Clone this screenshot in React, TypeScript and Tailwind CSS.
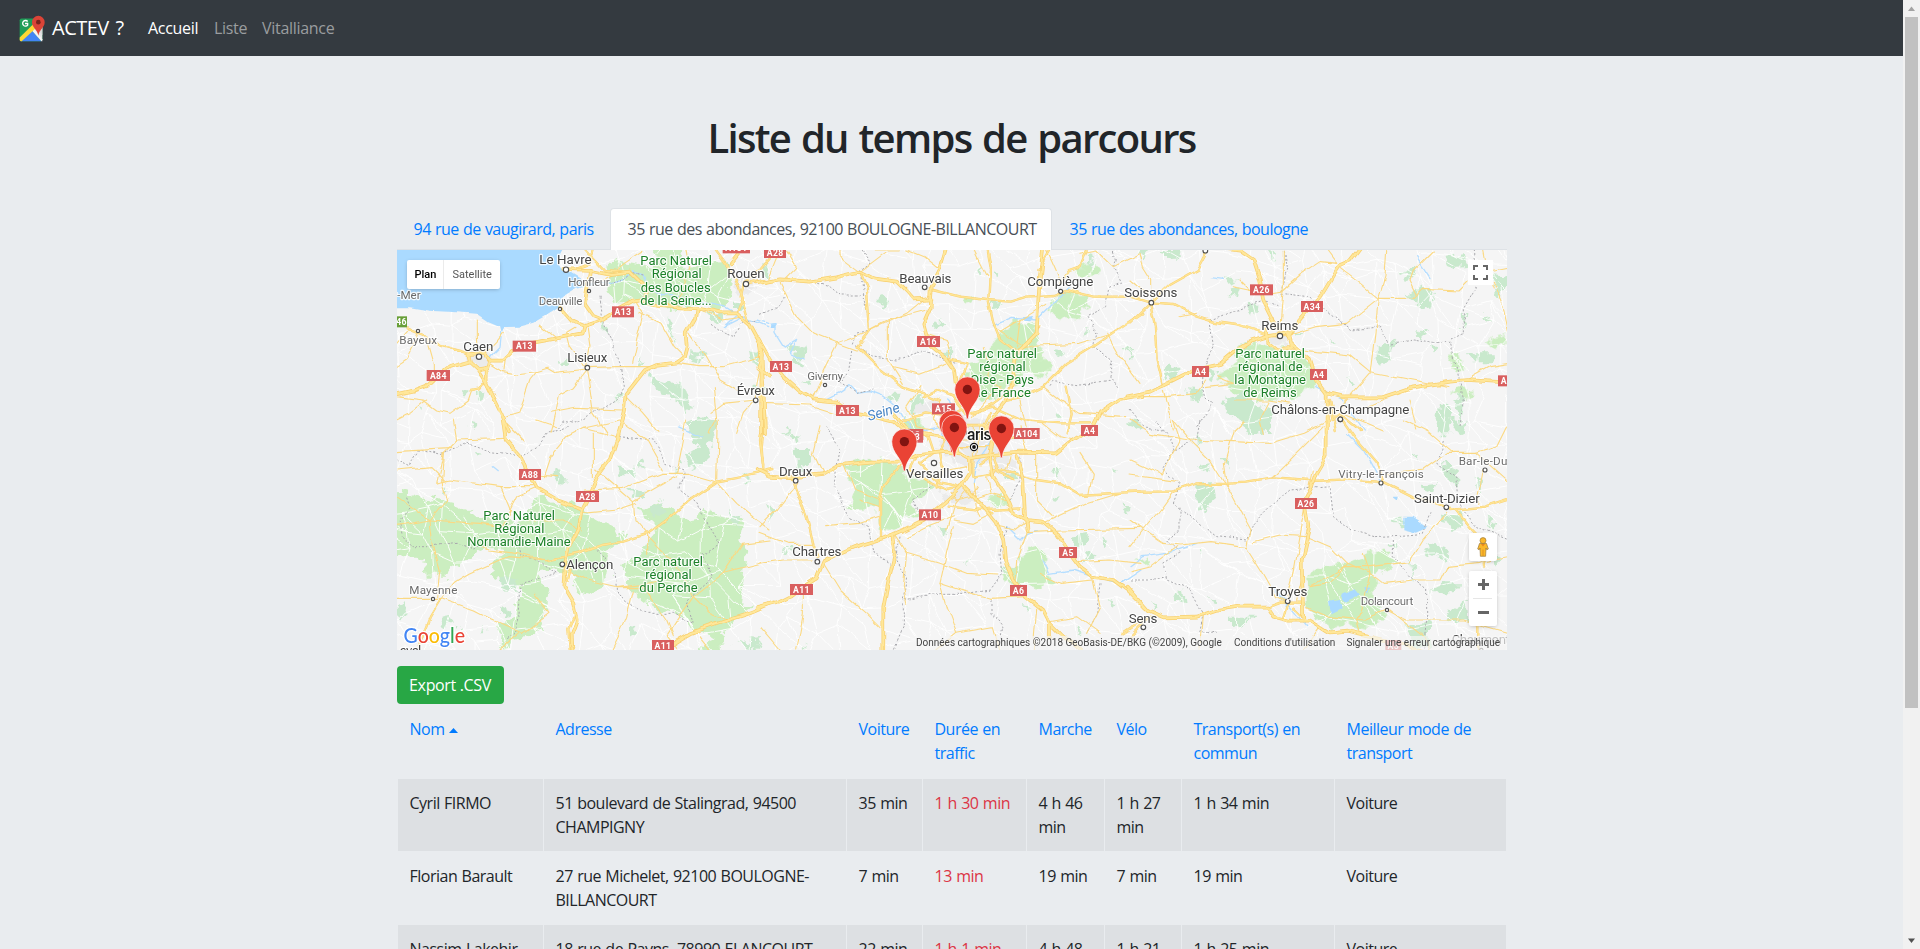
import React from "react";

type Label = [number, number, string, number, string?];
type Shield = [number, number, number, string, string?];
type Tile = {
  x: number;
  y: number;
  parks: string[];
  woods: string[];
  water: string[];
  rivers: string[];
  borders: string[];
  motorways: string[];
  primary: string[];
  secondary: string[];
  shields: Shield[];
  dots: [number, number, number][];
  labels: Label[];
};

/* Each tile is stored in its own 3x coordinate space. */
const TILES: Tile[] = [
  {
    x: 390,
    y: 200,
    parks: [
      "780,140 860,140 890,200 960,190 1010,180 1025,250 1010,310 980,325 940,300 900,330 860,330 800,320 760,300 720,310 680,310 655,270 660,230 650,200 680,180 740,190 790,200 800,170",
    ],
    woods: [
      "930,330 1000,340 990,370 960,360", "780,530 830,545 880,570 905,610 890,640 860,600 810,575 790,560",
      "880,670 940,645 985,660 975,700 900,700", "835,350 852,390 855,425 840,400", "1080,450 1120,460 1110,500 1085,480",
      "510,480 535,475 530,495 515,495", "260,575 280,580 275,600 258,592", "215,570 240,575 225,590", "1110,190 1140,200 1135,240 1110,220",
      "85,615 100,620 92,630", "1035,310 1060,310 1055,330 1035,330", "640,350 655,380 645,400 635,370", "900,460 950,470 940,485 905,480",
      "680,570 700,580 690,600", "1095,550 1130,560 1120,580 1090,575", "750,470 765,480 752,490",
    ],
    water: [
      "0,130 525,130 500,180 512,205 545,218 590,246 640,250 560,266 520,290 505,320 470,345 430,368 385,380 345,381 335,400 330,380 295,365 265,345 230,342 180,338 120,335 60,325 0,325",
    ],
    rivers: [
      "600,247 660,250 700,240 730,215 760,225 770,260 820,290 870,290 950,310 1000,320 1040,345 1000,380 1060,350 1130,380",
      "335,395 330,440 300,470",
    ],
    borders: [
      "630,290 640,370 660,410 690,490 700,560 680,600 610,640 560,670 520,660 500,690", "760,225 730,218 700,240 660,250",
      "960,370 1000,400 1030,410 1050,370 1100,360",
    ],
    motorways: [
      "0,590 70,575 110,560 135,535 180,500 235,485", "235,462 285,460 300,482 295,500 262,505 240,485 235,462",
      "300,482 340,482 370,455 430,428 500,415 575,400 580,378 630,362 665,340 730,305 760,300 800,318 920,325 990,340 1040,340 1080,375 1110,430 1115,470 1105,500 1140,530",
      "920,325 915,355 890,400 893,440 885,470 860,488 800,495 765,510 710,580 705,630 685,720",
      "262,505 285,540 310,590 335,640 360,700", "520,207 600,210 660,222 720,215 770,265 760,300",
      "600,210 585,310 610,345 635,355", "510,320 550,365 580,378", "1020,190 1060,140", "1115,460 1113,700",
      "290,500 290,545",
    ],
    primary: [
      "615,140 600,190 560,205", "575,140 640,210 700,215", "965,140 1010,200 1040,240 1060,290 1040,340", "1150,160 1090,230 1065,250 1055,290 1080,375",
      "50,385 100,405 150,440 235,462", "285,545 270,565 245,570", "1065,255 1120,240",
    ],
    secondary: [
      "85,392 75,430 50,480 20,500", "110,420 130,490 130,520", "262,360 262,410 265,460", "340,400 320,425 285,460",
      "300,490 340,515 380,522 440,515 475,505 500,520 590,510 540,440 530,400 555,385", "590,503 680,500 800,500",
      "590,515 600,570 610,640 650,700", "590,510 550,560 505,585 495,640 480,700", "440,515 420,540 400,600 385,640 350,650",
      "20,590 100,600 140,630 180,640 235,600 245,570", "740,310 760,340 740,420 725,490", "750,340 810,370 850,440 880,470",
      "900,400 950,470 990,540 1040,570", "860,490 930,500 1000,500 1080,480 1110,470", "1110,500 1100,560 1095,600 1060,640 1040,700",
      "710,590 760,640 810,700", "350,470 345,510", "20,430 60,385", "500,415 450,375", "920,330 1000,360 1060,350",
      "760,150 700,190 640,240", "590,370 600,440 590,500", "20,660 60,640 110,600", "890,140 900,200 870,290 850,320",
      "970,560 980,660 960,700", "1095,600 1000,610 960,640", "480,640 560,625 700,630",
    ],
    shields: [
      [666, 319, 66, "A13"], [368, 422, 70, "A13"], [110, 510, 70, "A84"], [998, 127, 82, "A131"], [1122, 141, 66, "A28"], [0, 349, 51, "A46", "#689f38"],
    ],
    dots: [[528, 209, 8], [597, 273, 5], [510, 327, 5], [1068, 252, 8], [84, 393, 5], [267, 470, 8], [592, 503, 7], [1097, 601, 7]],
    labels: [
      [448, 192, "Le Havre", 157, "city"], [535, 257, "Honfleur", 124, "town"], [446, 314, "Deauville", 131, "town"],
      [1012, 234, "Rouen", 112, "city"], [28, 432, "Bayeux", 113, "town"], [220, 453, "Caen", 90, "city"], [532, 486, "Lisieux", 120, "city"],
      [1040, 585, "Évreux", 115, "city"], [-30, 297, "Sur-Mer", 122, "town"],
      [751, 196, "Parc Naturel", 215, "park"], [785, 235, "Régional", 150, "park"], [752, 275, "des Boucles", 210, "park"], [751, 314, "de la Seine...", 214, "park"],
    ],
  },
  {
    x: 760,
    y: 200,
    parks: [
      "740,370 830,370 840,420 830,460 870,500 850,530 800,520 760,560 700,540 640,520 620,490 690,470 710,420",
      "590,290 640,285 655,300 610,318", "890,280 950,275 990,310 960,360 900,350 870,340", "950,200 1010,190 1020,220 980,230 950,225",
      "610,520 720,520 740,560 700,600 640,590", "780,440 840,440 850,480 800,490",
    ],
    woods: [
      "360,285 385,290 370,325 350,305", "90,440 140,450 130,500 100,480", "880,450 915,455 900,480", "525,360 550,355 545,372 522,375",
      "980,160 1005,165 990,200", "650,210 670,205 668,222", "680,310 720,305 700,330", "440,610 480,590 500,620 450,640", "380,590 420,590 400,610",
      "1090,450 1130,450 1110,470", "560,440 580,450 575,480", "125,545 160,540 150,560", "540,455 570,450 560,480",
      "885,640 910,640 900,660", "700,210 720,220 705,235", "970,390 990,395 975,410",
    ],
    water: ["785,352 820,348 808,364 790,362", "25,368 45,366 46,385 30,385"],
    rivers: [
      "-10,360 20,370 45,370 45,400 70,440 110,415 90,460 130,480", "200,600 240,580 270,560 290,580 330,575 370,590 420,630 450,680",
      "700,380 760,355 830,360 870,320 930,260", "560,700 600,640 560,600",
    ],
    borders: [
      "300,150 330,190 300,210 310,280 325,340 330,390 290,400 280,430 330,470 410,480 490,450 560,480 590,490",
      "140,240 210,260 240,285 300,285", "1060,150 1070,180 1060,200 1085,250 1050,260 1040,320 980,350 1010,400 1000,440 1060,480 1050,530 1070,560",
      "870,560 880,545 960,555 1050,540", "275,450 265,520 240,550 290,580 340,570", "0,340 50,320 80,290",
    ],
    motorways: [
      "-10,250 60,238 150,245 230,232 300,215 340,235 410,245 440,275 460,298 515,295",
      "560,140 540,210 515,260 512,320 490,370 500,405 515,440 560,475 585,510 590,550 620,620",
      "850,140 840,230 835,300 830,400 800,430 770,455 760,520 740,600 700,650 670,700",
      "-5,415 30,480 70,530 120,575 160,598 230,605 280,640 340,650 400,665 440,700", "1150,588 1080,600 1020,640 990,700",
      "0,425 10,560 15,700",
    ],
    primary: [
      "520,270 600,290 680,300 750,305 800,290 880,285 920,270 1000,290 1140,290", "1150,340 1060,400 1000,440 920,490 850,560 790,590 740,600",
      "300,215 320,260 330,390 290,440 350,500 430,560 490,580 540,600", "680,150 690,210 685,300 700,370 720,420 760,450",
      "980,150 960,200 930,210 900,250", "490,590 530,570 580,590 620,640 700,620 790,660 900,670 990,670", "560,475 620,490 600,540",
      "430,660 500,640 560,650 620,620", "740,580 700,610 640,640", "920,560 935,640 920,700", "870,150 835,210",
    ],
    secondary: [
      "60,250 110,350 160,400 235,430 290,450", "235,430 200,500 160,590", "240,150 240,170 300,215", "380,155 360,170 300,215", "540,210 490,170 440,150",
      "640,150 680,230", "230,430 320,395 385,360 500,330", "385,360 385,480 430,550", "400,500 480,520 560,490", "720,400 800,350 860,310",
      "760,450 830,435 960,430 1060,400", "850,560 900,600 960,640 1100,650", "0,610 150,615 230,640", "860,150 900,240",
      "500,400 560,420 580,500", "700,380 790,440 840,380", "780,360 770,440", "670,440 690,540 740,580", "1040,400 1080,470 1140,550",
      "20,250 60,150", "80,150 110,200 60,250", "640,650 680,600 720,560", "480,560 440,620 470,680", "540,600 520,660 560,700", "780,600 800,690",
      "960,160 1010,150 1060,200 1140,160", "520,275 440,340 330,390", "460,640 470,680 520,690", "340,150 420,150",
    ],
    shields: [
      [13, 141, 65, "A28"], [471, 408, 69, "A16"], [30, 483, 66, "A13"], [228, 615, 69, "A13"], [516, 610, 69, "A15"], [963, 675, 51, "A4"], [421, 687, 69, "A13"],
    ],
    dots: [[494, 262, 7], [902, 274, 6], [195, 555, 5]],
    labels: [
      [418, 248, "Beauvais", 156, "city"], [802, 257, "Compiègne", 198, "city"], [142, 539, "Giverny", 107, "town"],
      [622, 473, "Parc naturel", 209, "park"], [658, 512, "régional", 139, "park"], [631, 551, "Oise - Pays", 191, "park"], [640, 590, "de France", 173, "park"],
    ],
  },
  {
    x: 1130,
    y: 200,
    parks: [
      "320,440 370,425 420,445 470,440 540,480 560,520 550,560 500,590 430,600 340,590 290,560 265,520 310,490",
      "960,450 990,460 1000,500 970,520 955,480", "950,580 990,560 1025,575 1010,600", "1080,410 1125,400 1140,430 1070,435",
    ],
    woods: [
      "90,150 150,150 160,170 110,175", "285,235 330,240 300,248", "300,265 330,262 320,290 290,285", "830,290 870,255 915,280 900,330 860,310",
      "945,170 1000,165 1020,200 960,205", "740,440 790,425 780,460 755,500 740,470", "1010,460 1090,460 1095,490 1040,490",
      "280,600 340,580 420,640 430,700 360,680 300,650", "175,565 220,570 210,600 180,595", "930,620 955,620 965,700 920,700",
      "1080,225 1140,230 1110,300", "110,490 150,510 130,550 105,530", "810,220 860,205 850,230 820,240", "420,150 435,170 425,185",
      "1060,350 1095,345 1090,370", "990,340 1010,350 1000,385", "350,310 380,320 375,350", "600,420 618,425 608,430", "860,390 885,395 875,415",
      "650,535 680,545 665,555", "25,150 60,150 40,175", "975,590 1000,600 990,670", "500,400 515,405 505,412", "230,510 260,520 250,545", "900,430 915,445 905,455",
    ],
    water: [],
    rivers: ["860,170 880,200 900,230", "240,230 280,235", "560,560 640,600 700,690"],
    borders: [
      "460,150 470,210 455,280 530,290 600,340 670,390 750,380 780,430 850,420 910,430 960,430 980,500 1000,600 990,680",
      "240,360 320,330 400,300 445,320", "240,360 250,440 215,520 230,590 250,610 200,680", "1030,150 1040,260 1000,330 1000,400 960,420", "0,630 40,680 100,690",
    ],
    motorways: [
      "225,140 330,152 370,180 390,240 400,300 430,360 450,390", "480,430 540,480 560,540 590,580 590,700", "590,580 640,592 760,592 850,562 960,545 1010,540 1140,548",
      "695,140 660,185 625,200 570,290 500,370 470,410", "-10,590 60,575 110,550 190,510 270,492 320,450 360,425 410,410", "410,410 470,400 480,440 440,445 415,425 410,390",
    ],
    primary: [
      "230,155 200,210 120,255 60,310 0,370", "60,310 130,315 200,350 250,365 320,375 410,405", "60,310 75,380 80,480 100,560", "0,290 60,308", "590,590 605,660 630,640 690,690",
      "600,600 620,690", "410,405 450,410 480,405",
    ],
    secondary: [
      "30,160 40,200 65,240 65,300", "460,150 460,260 450,380", "460,270 510,225 570,185 620,190", "480,405 560,380 650,370 745,295 850,295 880,265 990,270 1030,230",
      "745,295 735,400 720,520 650,600 610,640", "590,150 620,190", "630,205 690,250 745,295", "770,150 765,230 745,295", "910,150 850,210 840,240 860,280",
      "480,445 560,455 660,465 720,515 850,540 960,560", "100,570 130,690", "0,590 110,590 200,580 230,540", "260,530 310,550 230,560", "310,600 420,600 480,610",
      "1060,150 1075,230 1090,270", "1090,250 1125,330 1140,400", "1010,540 1080,500 1140,490", "640,640 760,690", "150,350 200,340", "420,600 390,660 400,700",
      "330,240 360,270", "0,240 60,290", "1040,220 1140,200", "310,260 400,280 460,270", "840,600 860,690", "670,640 740,610 780,595",
    ],
    shields: [[360, 253, 69, "A26"], [513, 303, 66, "A34"], [186, 498, 51, "A4"], [540, 507, 51, "A4"], [1104, 526, 51, "A4"]],
    dots: [[226, 152, 7], [64, 308, 7], [450, 408, 8], [631, 658, 7]],
    labels: [
      [-17, 292, "Soissons", 159, "city"], [394, 389, "Reims", 111, "city"], [424, 643, "Châlons-en-Champagne", 414, "city"],
      [316, 473, "Parc naturel", 209, "park"], [324, 512, "régional de", 194, "park"], [313, 551, "la Montagne", 215, "park"], [340, 590, "de Reims", 160, "park"],
    ],
  },
  {
    x: 390,
    y: 420,
    parks: [
      "0,205 70,225 200,255 280,290 400,300 430,240 460,225 500,245 565,260 620,300 700,340 690,365 640,400 660,440 650,500 600,520 540,500 560,470 490,450 440,460 480,520 470,560 450,600 460,630 420,650 380,660 330,690 335,650 320,620 350,600 380,590 390,540 390,500 300,460 310,430 350,400 260,380 230,420 190,440 180,470 110,470 105,420 0,400",
      "750,270 800,240 850,270 880,300 930,290 940,260 1000,290 1060,300 1050,350 1070,400 1060,480 1050,550 1090,560 1040,600 990,640 1000,680 940,640 860,580 800,570 760,540 720,510 720,480 690,430 740,420 770,370 800,330 790,310",
      "930,680 990,640 1000,700 930,700",
    ],
    woods: [
      "890,20 980,5 985,40 950,80 960,120 900,150 880,110 930,80", "680,140 740,140 740,170 690,165", "500,150 525,165 520,200 495,180",
      "145,590 180,585 190,610 150,620", "20,550 50,540 40,600 20,590", "718,205 765,215 755,235 720,225", "780,250 820,240 830,280 790,290",
      "330,470 380,480 380,510 340,500", "720,620 745,625 735,650 720,645", "250,90 272,95 262,110", "1020,280 1045,285 1035,330", "750,120 770,130 755,145",
      "850,140 870,150 860,165", "1060,175 1080,170 1075,190", "200,620 215,625 205,635", "240,5 260,10 250,30", "320,560 360,570 350,590",
      "1030,670 1110,660 1100,690", "155,200 185,210 170,225", "280,620 290,640 275,640",
    ],
    water: [],
    rivers: ["310,140 325,152", "870,20 940,50"],
    borders: [
      "20,120 60,140 90,90 150,105 230,70 300,95 400,105 440,80 470,40 540,15", "690,50 790,60 830,130 880,150 870,210 920,250 990,370 940,400 970,470 890,540 910,610 850,580 760,580 680,520 675,450 620,390",
      "50,230 60,260 30,300 40,350 70,380 130,380 200,370 250,390 380,350 390,410 440,420 500,460 390,490 380,640 350,660",
    ],
    motorways: [
      "340,-10 350,60 395,110 410,150 440,205 500,240 570,265", "700,-10 680,60 660,120 615,180 590,240 575,270 565,330 535,390 525,430 520,500 550,550 560,600 545,640 548,700",
      "1150,550 1080,580 1000,605 900,640 800,700",
    ],
    primary: [
      "530,410 570,400 640,375 700,365 775,340", "470,420 530,410", "1150,150 1060,170 980,185 900,240 830,300 775,340", "150,540 120,590 100,640 80,700", "1125,-10 1110,60 1120,140",
      "515,430 540,440 530,480", "540,700 535,620 550,590",
    ],
    secondary: [
      "190,0 200,60 160,100 155,180 170,240 120,300 50,250 20,230", "200,60 350,55", "20,95 190,85", "430,200 330,200 180,180 155,185", "330,200 360,270 340,320 270,310 120,300",
      "120,300 130,380 150,450 140,530", "440,205 380,230 350,290", "620,150 690,210 730,245 735,300 770,340", "460,170 480,110 530,50 580,25 690,0", "500,170 440,165",
      "610,40 610,170", "580,210 700,205 820,160 890,160 980,185", "700,10 770,60 820,150", "860,160 880,60 890,0", "985,0 980,180", "985,190 1040,250 1100,300 1140,330",
      "580,280 680,270 740,250", "20,535 150,535 250,570 310,600 400,640", "150,540 190,490 240,460 350,410 470,420", "400,640 480,580 430,520", "530,450 590,480 680,500 760,490 850,470",
      "680,500 760,500 830,600 850,650", "730,510 710,590 690,640 660,700", "910,530 870,590 830,650", "910,530 1000,460 1140,425", "910,530 850,430 770,350", "910,530 960,580 1010,600",
      "230,360 300,390 370,400 470,420", "340,0 400,60", "20,150 120,140 160,180", "0,320 120,300", "390,640 330,690", "730,245 860,170", "170,180 140,190 160,100",
      "500,20 440,0", "930,650 970,700", "1140,360 1060,370 1000,460", "830,650 860,690", "400,300 520,300 570,330", "770,340 770,400", "580,25 680,50",
    ],
    shields: [[387, 147, 66, "A88"], [558, 213, 69, "A28"], [786, 660, 66, "A11"]],
    dots: [[517, 433, 7], [129, 537, 5]],
    labels: [
      [280, 299, "Parc Naturel", 215, "park"], [313, 338, "Régional", 150, "park"], [232, 377, "Normandie-Maine", 310, "park"],
      [529, 446, "Alençon", 141, "city"], [730, 437, "Parc naturel", 209, "park"], [766, 476, "régional", 139, "park"], [748, 515, "du Perche", 175, "park"],
      [58, 522, "Mayenne", 144, "town"], [10, 704, "Laval", 84, "city"],
    ],
  },
  {
    x: 760,
    y: 420,
    parks: [
      "250,135 330,120 430,135 440,170 500,180 530,200 490,220 460,250 480,280 440,300 400,330 360,320 355,260 260,270 290,200 260,170",
      "800,370 840,390 860,400 870,430 850,460 885,490 850,500 740,490 725,460 770,440 790,400", "690,225 730,220 750,240 720,260 680,245",
      "430,-10 480,0 490,30 450,30",
    ],
    woods: [
      "745,155 775,150 770,180 740,180", "930,350 980,345 990,365 940,385", "980,395 1010,400 970,435", "110,90 150,90 150,130 110,150", "1020,360 1045,365 1030,385",
      "70,40 120,50 100,80 90,30", "540,320 560,325 550,350", "780,550 820,560 815,570", "870,150 900,145 890,170", "870,240 910,225 890,245", "490,325 510,320 505,335",
      "60,380 100,385 95,400", "1110,0 1140,5 1130,30", "1090,260 1110,262 1105,275", "120,675 140,680 130,690", "30,250 45,255 25,310", "720,440 750,435 740,460",
      "615,425 630,430 622,437", "1050,540 1070,548 1060,560", "945,625 965,630 955,640", "1065,140 1080,150 1070,160",
    ],
    water: [],
    rivers: ["740,320 780,360 800,340 830,330", "850,420 870,460 940,450 1000,470 1080,490 1140,450", "440,20 470,40 540,20 560,60 590,90", "640,190 650,130 700,60"],
    borders: [
      "200,20 240,90 220,200 270,290 320,320 340,400 390,430", "420,350 410,420 440,470 430,540 550,520 620,520 690,510 725,460 720,400 740,320",
      "430,550 430,620 400,690", "690,540 690,580 730,610 720,670", "780,110 780,180 750,240", "1020,490 1010,580 980,640", "520,190 460,240 480,280",
    ],
    motorways: [
      "590,50 610,20 670,20 700,60 690,105 630,115 595,95 590,50", "400,-20 440,30 500,40 560,50 590,60", "-10,150 30,170 100,175 190,165 240,135 330,125 430,125 470,105 560,95 600,100",
      "630,110 630,160 600,205 550,250 490,300 430,330 370,355 300,375 240,400 190,425 170,475 130,500 90,530 50,550 -10,565",
      "400,345 405,400 385,480 370,560 370,700", "610,200 670,260 710,310 730,360 735,420 760,480 800,530 850,570 870,610 900,640 970,700", "870,610 870,650",
      "700,170 740,230 760,280 800,300 850,305 890,340 930,400 960,440 1000,470 1060,480 1100,510 1150,560", "690,105 780,98 890,100 940,60 1000,20", "770,110 790,180 795,290 800,330",
      "690,110 700,170",
    ],
    primary: [
      "100,190 140,290 160,370 175,410", "700,150 760,160 830,180 900,190 960,225 1140,215", "360,355 360,240 370,200 430,130", "560,260 670,270 700,280", "690,270 780,265",
      "15,-10 5,80 10,150", "1150,600 1090,640", "640,110 640,170 700,160", "660,130 700,100 720,160 760,180", "500,40 520,100 480,130 540,190 590,200",
      "560,50 540,100 550,150 530,200", "470,110 450,150 500,180 560,210 610,200", "700,60 760,50 800,30", "600,40 560,10 540,-20", "670,20 690,-20",
    ],
    secondary: [
      "0,430 70,420 160,420", "190,430 240,510 320,580 360,620", "130,500 130,580 110,690", "0,320 50,270 110,190", "405,345 440,400 540,430 620,460 710,465", "440,400 430,500 440,550",
      "580,320 560,400 540,490 560,560 590,640", "440,350 500,320 580,290", "800,330 770,420 765,480", "800,335 900,330 1140,325", "830,100 830,240 880,290", "960,100 1000,160 990,220",
      "840,460 900,490 1000,480", "690,535 800,530", "870,605 950,590 1020,640", "950,425 1050,420 1140,430", "850,310 980,250 1080,220", "590,640 530,690", "640,190 650,270 660,290",
      "0,620 60,690", "540,490 600,510 690,535", "600,60 680,60", "640,20 640,110", "600,80 690,80", "660,20 650,110", "610,40 690,50", "620,210 580,260 560,330", "700,280 640,310 580,300",
      "640,240 700,220 740,230", "560,150 620,140", "650,60 760,-10", "300,240 360,260", "360,290 300,310 200,320", "250,130 280,210 360,240", "440,100 430,130", "800,300 760,330 720,320",
      "830,565 820,690", "160,370 80,370 0,340", "1000,470 1020,560 980,640", "590,640 700,620 720,690", "780,20 800,100", "850,10 900,50 940,60", "180,20 160,100 190,165",
      "570,220 590,240 630,230 650,200", "680,170 690,220 740,240", "750,110 740,150 700,160",
    ],
    shields: [
      [421, 35, 68, "A13"], [762, 24, 77, "A104"], [963, 15, 51, "A4"], [477, 268, 66, "A10"], [897, 381, 54, "A5"], [90, 492, 69, "A11"], [750, 495, 51, "A6"],
    ],
    dots: [[107, 182, 7], [522, 129, 8], [172, 425, 7]],
    labels: [
      [57, 167, "Dreux", 100, "city"], [438, 173, "Versailles", 172, "city"], [97, 407, "Chartres", 147, "city"], [593, 59, "Paris", 102, "capital"],
    ],
  },
  {
    x: 1130,
    y: 420,
    parks: [
      "525,470 570,445 640,430 700,410 715,395 780,405 810,430 730,470 740,560 770,590 720,620 640,610 600,620 560,590 530,560", "20,420 60,408 65,425 25,430",
    ],
    woods: [
      "200,190 250,190 260,240 220,280 195,260", "200,140 240,130 230,160", "340,-10 420,0 415,35 360,45 330,25", "930,290 990,280 1000,310 960,330", "300,590 370,590 350,620 300,610",
      "900,370 950,380 940,420 890,400", "920,490 990,490 970,520 900,520", "960,570 1010,540 1015,600 950,610", "875,190 915,185 910,220 880,210", "830,620 900,610 900,690 840,670",
      "790,290 820,290 830,310 790,310", "775,370 800,365 795,395", "140,520 165,515 170,550 130,540", "840,430 855,430 850,475", "935,130 980,150 985,200 950,170",
      "960,0 1010,5 1000,40 980,30", "275,110 295,120 290,145", "195,45 215,60 205,80", "1040,170 1055,180 1045,230", "1070,290 1090,300 1080,330", "200,380 215,385 208,400",
      "240,530 260,540 250,550", "60,550 80,560 70,570", "850,100 865,95 860,110", "1090,410 1110,415 1100,430",
    ],
    water: ["820,290 850,290 895,320 860,335 820,325", "640,520 680,505 690,520 645,545 635,535", "600,545 630,540 635,565 605,580", "703,498 720,500 715,520 708,515", "783,230 800,230 798,242"],
    rivers: ["0,440 40,410 110,400 200,370", "470,560 430,500 530,620", "650,40 700,90 760,200"],
    borders: [
      "210,0 200,60 130,100 110,40 80,0", "130,100 100,150 150,190 130,250 220,320 260,350 350,360 370,310 430,250 480,210 600,200 610,290 660,330 730,350 830,345 880,340 900,280",
      "790,360 790,410 840,470 890,510 890,600 880,690", "150,260 150,330 110,360 150,400 100,430 110,480 180,510 220,580 210,630 260,640", "0,480 60,480 110,470", "940,60 920,130 980,170 990,260 1040,320 1140,360",
    ],
    motorways: [
      "590,-10 590,110 560,160 545,205 525,240 530,270 538,320 515,420 520,600", "-10,500 50,570 100,592 200,590 260,570 330,560 410,560 430,590 480,602 540,602 600,640 650,635 740,655 840,680 900,700",
    ],
    primary: [
      "630,-10 680,60 740,130 760,185 850,230 950,265 980,270 1020,320 1060,360 1065,440", "960,270 1060,260 1140,235", "540,180 430,172 350,185 290,188 200,190 130,215 0,215", "545,183 650,178 740,185 760,190",
      "60,590 0,650", "410,560 450,545 520,545", "460,590 470,550", "1045,600 1045,700", "490,560 520,590",
    ],
    secondary: [
      "130,215 90,270 40,330 0,380", "40,330 0,300", "40,330 100,370 150,375 240,365 350,380 400,460 440,530 470,545", "350,380 360,330 290,200 240,120 190,70 130,0",
      "290,200 280,130 310,30 340,0", "60,40 180,60 310,65 420,70 520,40 600,0", "430,170 490,110 580,20", "370,365 450,345 530,350 600,380 650,430 720,460", "470,545 490,470 510,350 550,150",
      "540,500 640,440 720,440 840,425 880,360 950,280", "720,460 760,490 850,480 930,480 950,440 1050,430 1140,410", "720,460 700,550 680,600 690,640", "530,560 600,590 700,600 770,570 830,600 1000,600 1140,640",
      "780,570 880,650 900,690", "750,165 880,150 950,100 1040,100 1140,190", "820,0 900,40 970,100", "140,380 60,440 0,455", "0,165 150,185", "570,620 520,690", "0,0 60,40", "1140,0 1100,80 1040,100",
      "0,120 100,165 150,60 130,0", "220,590 210,690", "650,430 600,490 540,500", "1060,150 1040,250", "700,400 720,460", "520,460 500,540",
    ],
    shields: [[495, 234, 66, "A26"], [766, 660, 48, "A5"]],
    dots: [[631, -2, 7], [753, 189, 6], [1065, 150, 6], [949, 262, 7], [473, 544, 7], [771, 570, 5], [40, 622, 7], [1054, 690, 5]],
    labels: [
      [625, 174, "Vitry-le-François", 256, "town"], [986, 135, "Bar-le-Duc", 165, "town"], [852, 248, "Saint-Dizier", 197, "city"], [415, 527, "Troyes", 117, "city"],
      [692, 554, "Dolancourt", 158, "town"], [-4, 608, "Sens", 86, "city"], [965, 672, "Chaumont", 175, "city"],
    ],
  },
];

const LABEL_STYLE: Record<string, { size: number; fill: string; weight: number }> = {
  city: { size: 40, fill: "#444444", weight: 400 },
  town: { size: 35, fill: "#6b6b6b", weight: 400 },
  park: { size: 39, fill: "#1c8028", weight: 400 },
  capital: { size: 47, fill: "#1c1c1c", weight: 500 },
};

function createRandom(seed: number) {
  let s = seed;
  return () => {
    s = (s * 1664525 + 1013904223) % 4294967296;
    return s / 4294967296;
  };
}

function buildLocalRoads() {
  const rnd = createRandom(42);
  const step = 23;
  const cols = 52;
  const rows = 20;
  const nodes: number[][][] = [];
  for (let r = 0; r < rows; r++) {
    nodes.push([]);
    for (let c = 0; c < cols; c++) {
      nodes[r].push([380 + c * step + (rnd() - 0.5) * 20, 235 + r * step + (rnd() - 0.5) * 20]);
    }
  }
  let d = "";
  const link = (a: number[], b: number[]) => {
    d += `M${a[0].toFixed(1)} ${a[1].toFixed(1)}L${b[0].toFixed(1)} ${b[1].toFixed(1)}`;
  };
  for (let r = 0; r < rows - 1; r++) {
    for (let c = 0; c < cols - 1; c++) {
      if (rnd() < 0.8) link(nodes[r][c], nodes[r][c + 1]);
      if (rnd() < 0.8) link(nodes[r][c], nodes[r + 1][c]);
      if (rnd() < 0.55) link(nodes[r][c], nodes[r + 1][c + 1]);
    }
  }
  return d;
}

const LOCAL_ROADS = buildLocalRoads();

const tileTransform = (t: Tile) => `translate(${t.x} ${t.y}) scale(0.333333)`;

function Layer({ draw }: { draw: (t: Tile) => React.ReactNode }) {
  return (
    <>
      {TILES.map((t, i) => (
        <g key={i} transform={tileTransform(t)}>
          {draw(t)}
        </g>
      ))}
    </>
  );
}

function Lines({ items, stroke, width, dash }: { items: string[]; stroke: string; width: number; dash?: string }) {
  return (
    <g fill="none" stroke={stroke} strokeWidth={width} strokeLinejoin="round" strokeLinecap={dash ? "butt" : "round"} strokeDasharray={dash}>
      {items.map((p, i) => (
        <polyline key={i} points={p} />
      ))}
    </g>
  );
}

function Pin({ x, y }: { x: number; y: number }) {
  return (
    <g transform={`translate(${x} ${y}) scale(0.333333)`}>
      <path d="M-3 86C-5 50 -38 36 -38 0A38 38 0 0 1 38 0C38 36 5 50 3 86Q0 90 -3 86Z" fill="#ea4335" stroke="#ffffff" strokeWidth="2" />
      <circle r="14" fill="#811411" />
    </g>
  );
}

function MapCanvas() {
  return (
    <svg className="block h-[400px] w-full" viewBox="397 250 1110 400" preserveAspectRatio="none" fontFamily="Roboto, sans-serif">
      <defs>
        <filter id="rough" x="397" y="250" width="1110" height="400" filterUnits="userSpaceOnUse">
          <feTurbulence type="fractalNoise" baseFrequency="0.09" numOctaves="3" seed="4" />
          <feDisplacementMap in="SourceGraphic" scale="15" xChannelSelector="R" yChannelSelector="G" />
        </filter>
        <filter id="wobble" x="380" y="235" width="1145" height="430" filterUnits="userSpaceOnUse">
          <feTurbulence type="fractalNoise" baseFrequency="0.05" numOctaves="2" seed="9" />
          <feDisplacementMap in="SourceGraphic" scale="7" xChannelSelector="R" yChannelSelector="G" />
        </filter>
      </defs>
      <rect x="397" y="250" width="1110" height="400" fill="#f5f5f5" />
      <g filter="url(#rough)">
        <Layer draw={(t) => t.parks.map((p, i) => <polygon key={i} points={p} fill="#cbeec0" />)} />
        <Layer draw={(t) => t.woods.map((p, i) => <polygon key={i} points={p} fill="#c9e9cd" />)} />
      </g>
      <g fill="#ebebeb" filter="url(#rough)">
        <ellipse cx="973" cy="442" rx="34" ry="25" />
        <ellipse cx="960" cy="496" rx="18" ry="10" />
        <ellipse cx="1006" cy="464" rx="12" ry="9" />
        <ellipse cx="1280" cy="338" rx="10" ry="8" />
        <ellipse cx="745" cy="284" rx="11" ry="11" />
        <ellipse cx="479" cy="358" rx="11" ry="8" />
        <ellipse cx="930" cy="408" rx="14" ry="8" />
      </g>
      <g filter="url(#wobble)">
        <path d={LOCAL_ROADS} fill="none" stroke="#ffffff" strokeWidth="0.9" />
        <Layer draw={(t) => t.water.map((p, i) => <polygon key={i} points={p} fill="#aadaff" />)} />
        <Layer draw={(t) => <Lines items={t.rivers} stroke="#b5deff" width={4} />} />
        <Layer draw={(t) => <Lines items={t.borders} stroke="#a9a9ad" width={3} dash="6 6" />} />
        <Layer draw={(t) => <Lines items={t.secondary} stroke="#fbd983" width={3.3} />} />
        <Layer draw={(t) => <Lines items={t.primary} stroke="#f9d274" width={7} />} />
        <Layer draw={(t) => <Lines items={t.primary} stroke="#ffe595" width={4} />} />
        <Layer draw={(t) => <Lines items={t.motorways} stroke="#f8d070" width={11} />} />
        <Layer draw={(t) => <Lines items={t.motorways} stroke="#ffe79a" width={6.5} />} />
      </g>
      <Layer
        draw={(t) =>
          t.shields.map(([x, y, w, label, fill], i) => (
            <g key={i}>
              <rect x={x} y={y} width={w} height="33" fill={fill ?? "#d95f5f"} />
              <text x={x + w / 2} y={y + 26} textAnchor="middle" fontSize="26" fontWeight="700" letterSpacing="1" fill="#ffffff">
                {label}
              </text>
            </g>
          ))
        }
      />
      <Layer
        draw={(t) => (
          <>
            {t.dots.map(([x, y, r], i) => (
              <circle key={i} cx={x} cy={y} r={r} fill="#ffffff" stroke="#4f4f4f" strokeWidth="3.4" />
            ))}
            {t.labels.map(([x, y, label, w, kind], i) => {
              const s = LABEL_STYLE[kind ?? "city"];
              return (
                <text
                  key={i}
                  x={x}
                  y={y}
                  textLength={w}
                  fontSize={s.size}
                  fontWeight={s.weight}
                  fill={s.fill}
                  stroke="#ffffff"
                  strokeOpacity="0.85"
                  strokeWidth="7"
                  strokeLinejoin="round"
                  paintOrder="stroke"
                >
                  {label}
                </text>
              );
            })}
          </>
        )}
      />
      <g transform="translate(974 447)">
        <circle r="4.5" fill="#ffffff" />
        <circle r="3.6" fill="none" stroke="#111111" strokeWidth="1.2" />
        <circle r="1.9" fill="#111111" />
      </g>
      <text transform="translate(869 421) rotate(-17)" fontSize="14" fontStyle="italic" textLength="33" fill="#4a86c5" stroke="#ffffff" strokeWidth="2" paintOrder="stroke">
        Seine
      </text>
      <Pin x={967.4} y={389.5} />
      <Pin x={951.7} y={423} />
      <Pin x={954.4} y={427.5} />
      <Pin x={904.4} y={441.6} />
      <Pin x={1001.4} y={428.5} />
      <text
        x="403.5"
        y="642.5"
        textLength="61.5"
        lengthAdjust="spacingAndGlyphs"
        fontSize="20.5"
        fontWeight="500"
        fontFamily="Lato, sans-serif"
        stroke="#ffffff"
        strokeWidth="2.5"
        paintOrder="stroke"
      >
        <tspan fill="#4285f4">G</tspan>
        <tspan fill="#ea4335">o</tspan>
        <tspan fill="#fbbc05">o</tspan>
        <tspan fill="#4285f4">g</tspan>
        <tspan fill="#34a853">l</tspan>
        <tspan fill="#ea4335">e</tspan>
      </text>
    </svg>
  );
}

function MapView() {
  return (
    <div className="relative h-[400px] overflow-hidden font-[Roboto,sans-serif]">
      <MapCanvas />
      <div className="absolute left-[10px] top-[10px] flex h-[29px] rounded-[2px] bg-white text-[11px] leading-[29px] shadow-[0_1px_4px_-1px_rgba(0,0,0,0.3)]">
        <div className="w-[37px] border-r border-[#ebebeb] pl-2 font-medium text-black">Plan</div>
        <div className="w-[56px] pl-[9px] text-[#565656]">Satellite</div>
      </div>
      <div className="absolute right-[14px] top-[10px] flex size-[25px] items-center justify-center bg-white">
        <svg className="size-[15px]" viewBox="0 0 15 15" fill="none" stroke="#666666" strokeWidth="2">
          <path d="M1 5V1H5M10 1H14V5M14 10V14H10M5 14H1V10" />
        </svg>
      </div>
      <div className="absolute bottom-[89px] right-[10px] flex size-[28px] items-center justify-center rounded-[2px] bg-white shadow-[0_1px_4px_-1px_rgba(0,0,0,0.3)]">
        <svg className="h-[20px] w-[12px]" viewBox="0 0 12 20">
          <path d="M2.5 6.5H9.5L11.3 12 9.8 12.8 9 11 8.6 19.3H3.4L3 11 2.2 12.8.7 12Z" fill="#fbb829" stroke="#9b7a3c" strokeWidth=".7" />
          <circle cx="6" cy="3.6" r="3" fill="#fbb829" stroke="#9b7a3c" strokeWidth=".7" />
          <path d="M4 7H8L6 9.5Z" fill="#e8871e" />
          <path d="M6 12.5V19" stroke="#d98c1f" strokeWidth=".8" />
        </svg>
      </div>
      <div className="absolute bottom-[24px] right-[10px] h-[55px] w-[28px] rounded-[2px] bg-white shadow-[0_1px_4px_-1px_rgba(0,0,0,0.3)]">
        <svg className="block h-[55px] w-[28px]" viewBox="0 0 28 55">
          <path d="M9 13.5H20M14.5 8V19M9 41.5H20" stroke="#666666" strokeWidth="3" />
          <path d="M4 27.5H23" stroke="#e6e6e6" />
        </svg>
      </div>
      <div className="absolute bottom-0 right-0 flex h-[14px] justify-end whitespace-nowrap bg-[rgba(245,245,245,0.7)] pl-[6px] pr-[6px] text-[10px] leading-[14px] text-[#444444]">
        <span className="w-[318px]">Données cartographiques ©2018 GeoBasis-DE/BKG (©2009), Google</span>
        <span className="w-[112.5px]">Conditions d'utilisation</span>
        <span className="w-[154px]">Signaler une erreur cartographique</span>
      </div>
    </div>
  );
}

function BrandLogo() {
  return (
    <svg className="h-[27px] w-[26px]" viewBox="0 0 78 80">
      <rect x="2" y="10" width="68" height="68" rx="5" fill="#1f9d58" />
      <path d="M70 14V74L36 43Z" fill="#e6e6e6" />
      <path d="M36 43L5 78H67Z" fill="#4285f4" />
      <path d="M36 43L67 78H70V72L42 37Z" fill="#f4f4f4" />
      <path d="M2 67L50 20 60 30 8 78H5Q2 78 2 74Z" fill="#fdd835" />
      <path d="M45 38L66 14 70 24V60L56 40Z" fill="#dadada" />
      <path d="M26 19A8.5 8.5 0 1 0 26 30V25H18" fill="none" stroke="#ffffff" strokeWidth="4" />
      <path d="M58 62C56 42 39 38 39 21A19 19 0 0 1 77 21C77 38 60 42 58 62Z" fill="#db4437" />
      <circle cx="58" cy="21" r="7" fill="#7b231c" />
    </svg>
  );
}

const HEADERS = ["Nom", "Adresse", "Voiture", "Durée en traffic", "Marche", "Vélo", "Transport(s) en commun", "Meilleur mode de transport"];

const ROWS = [
  ["Cyril FIRMO", "51 boulevard de Stalingrad, 94500 CHAMPIGNY", "35 min", "1 h 30 min", "4 h 46 min", "1 h 27 min", "1 h 34 min", "Voiture"],
  ["Florian Barault", "27 rue Michelet, 92100 BOULOGNE-BILLANCOURT", "7 min", "13 min", "19 min", "7 min", "19 min", "Voiture"],
  ["Nassim Lakehir", "18 rue de Payns, 78990 ELANCOURT", "22 min", "1 h 1 min", "4 h 48 min", "1 h 21 min", "1 h 25 min", "Voiture"],
];

function ResultsTable() {
  return (
    <table className="w-[1109px] table-fixed border-collapse text-left tracking-[-0.5px] [word-spacing:0.7px]">
      <colgroup>
        <col className="w-[146px]" />
        <col className="w-[303px]" />
        <col className="w-[76px]" />
        <col className="w-[104px]" />
        <col className="w-[78px]" />
        <col className="w-[77px]" />
        <col className="w-[153px]" />
        <col className="w-[172px]" />
      </colgroup>
      <thead>
        <tr className="h-[74px] align-top text-[#007bff]">
          {HEADERS.map((h, i) => (
            <th key={h} className="border border-[#e9ecef] px-3 pt-3 pb-3 font-normal">
              {h}
              {i === 0 && (
                <svg className="ml-[5px] inline-block h-[5px] w-[9px] align-[2px]" viewBox="0 0 9 5">
                  <path d="M4.5 0L9 5H0Z" fill="#007bff" />
                </svg>
              )}
            </th>
          ))}
        </tr>
      </thead>
      <tbody>
        {ROWS.map((row) => (
          <tr key={row[0]} className="h-[73px] align-top text-[#212529] odd:bg-[#dde0e3]">
            {row.map((cell, i) => (
              <td key={i} className={i === 3 ? "border border-[#e9ecef] p-3 text-[#dc3545]" : "border border-[#e9ecef] p-3"}>
                {cell}
              </td>
            ))}
          </tr>
        ))}
      </tbody>
    </table>
  );
}

function Scrollbar() {
  return (
    <div className="flex h-full w-[17px] shrink-0 flex-col items-center bg-[#f1f1f1]">
      <svg className="h-[17px] w-[17px] shrink-0" viewBox="0 0 17 17">
        <path d="M8.5 6.5L12 11H5Z" fill="#a3a3a3" />
      </svg>
      <div className="h-[691px] w-[13px] shrink-0 bg-[#c1c1c1]" />
      <div className="flex-1" />
      <svg className="h-[17px] w-[17px] shrink-0" viewBox="0 0 17 17">
        <path d="M8.5 11L12 6.5H5Z" fill="#505050" />
      </svg>
    </div>
  );
}

export default function App() {
  return (
    <div className="flex h-[949px] w-[1920px] overflow-hidden bg-[#e9ecef] font-['Open_Sans','Noto_Sans',sans-serif] text-[16px] leading-6 text-[#212529]">
      <div className="h-full w-[1903px] shrink-0 overflow-hidden">
        <nav className="flex h-14 items-center bg-[#343a40] pl-[19px]">
          <BrandLogo />
          <span className="ml-[7px] w-[96px] whitespace-nowrap text-[20px] tracking-[-0.5px] [word-spacing:2px] text-white">ACTEV ?</span>
          <div className="flex tracking-[-0.3px] text-[#9a9d9f]">
            <span className="w-[66px] text-white">Accueil</span>
            <span className="w-[48px]">Liste</span>
            <span>Vitalliance</span>
          </div>
        </nav>
        <main className="mx-auto w-[1110px]">
          <h1 className="mt-[58px] h-12 text-center text-[40px] font-semibold leading-[48px] tracking-[-1.7px] [word-spacing:2px]">Liste du temps de parcours</h1>
          <ul className="mt-[46px] flex h-[42px] whitespace-nowrap border-b border-[#dee2e6] leading-[24px] tracking-[-0.5px] [word-spacing:0.5px] text-[#007bff]">
            <li className="h-[42px] w-[213px] px-[17px] py-[9px]">94 rue de vaugirard, paris</li>
            <li className="h-[42px] w-[442px] rounded-t border border-b-0 border-[#dee2e6] bg-white px-[17px] py-2 text-[#495057]">
              35 rue des abondances, 92100 BOULOGNE-BILLANCOURT
            </li>
            <li className="h-[42px] px-[18px] py-[9px]">35 rue des abondances, boulogne</li>
          </ul>
          <MapView />
          <button className="mt-4 block h-[38px] w-[107px] rounded bg-[#28a745] text-white tracking-[-0.35px]">Export .CSV</button>
          <ResultsTable />
        </main>
      </div>
      <Scrollbar />
    </div>
  );
}
